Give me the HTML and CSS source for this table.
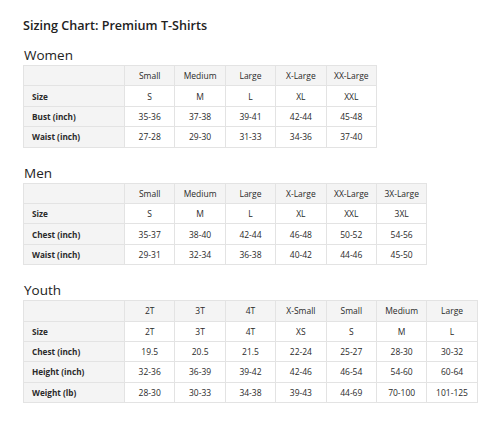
FILE: index.html
```html
<!DOCTYPE html>
<html>
<head>
<meta charset="utf-8">
<link rel="stylesheet" href="styles.css">
</head>
<body>
<main class="page">
  <h1 class="title">Sizing Chart: Premium T-Shirts</h1>

  <section class="group">
    <h2 class="group-title">Women</h2>
    <table class="chart">
      <tr class="head"><th></th><th>Small</th><th>Medium</th><th>Large</th><th>X-Large</th><th>XX-Large</th></tr>
      <tr><th>Size</th><td>S</td><td>M</td><td>L</td><td>XL</td><td>XXL</td></tr>
      <tr><th>Bust (inch)</th><td>35-36</td><td>37-38</td><td>39-41</td><td>42-44</td><td>45-48</td></tr>
      <tr><th>Waist (inch)</th><td>27-28</td><td>29-30</td><td>31-33</td><td>34-36</td><td>37-40</td></tr>
    </table>
  </section>

  <section class="group">
    <h2 class="group-title">Men</h2>
    <table class="chart">
      <tr class="head"><th></th><th>Small</th><th>Medium</th><th>Large</th><th>X-Large</th><th>XX-Large</th><th>3X-Large</th></tr>
      <tr><th>Size</th><td>S</td><td>M</td><td>L</td><td>XL</td><td>XXL</td><td>3XL</td></tr>
      <tr><th>Chest (inch)</th><td>35-37</td><td>38-40</td><td>42-44</td><td>46-48</td><td>50-52</td><td>54-56</td></tr>
      <tr><th>Waist (inch)</th><td>29-31</td><td>32-34</td><td>36-38</td><td>40-42</td><td>44-46</td><td>45-50</td></tr>
    </table>
  </section>

  <section class="group">
    <h2 class="group-title">Youth</h2>
    <table class="chart">
      <tr class="head"><th></th><th>2T</th><th>3T</th><th>4T</th><th>X-Small</th><th>Small</th><th>Medium</th><th>Large</th></tr>
      <tr><th>Size</th><td>2T</td><td>3T</td><td>4T</td><td>XS</td><td>S</td><td>M</td><td>L</td></tr>
      <tr><th>Chest (inch)</th><td>19.5</td><td>20.5</td><td>21.5</td><td>22-24</td><td>25-27</td><td>28-30</td><td>30-32</td></tr>
      <tr><th>Height (inch)</th><td>32-36</td><td>36-39</td><td>39-42</td><td>42-46</td><td>46-54</td><td>54-60</td><td>60-64</td></tr>
      <tr><th>Weight (lb)</th><td>28-30</td><td>30-33</td><td>34-38</td><td>39-43</td><td>44-69</td><td>70-100</td><td>101-125</td></tr>
    </table>
  </section>
</main>
</body>
</html>
```

FILE: styles.css
```css
html, body {
  margin: 0;
  padding: 0;
  background: #ffffff;
}

body {
  font-family: "Open Sans", "Noto Sans", sans-serif;
  color: #2b2b2b;
}

.page {
  padding: 17px 0 0 23px;
}

.title {
  margin: 0;
  font-size: 12.6px;
  font-weight: 600;
  line-height: 18px;
  color: #222;
}

.group {
  margin-top: 11px;
}

.group + .group {
  margin-top: 16px;
}

.group-title {
  margin: 0 0 1px 1px;
  font-size: 13.5px;
  font-weight: 400;
  line-height: 18px;
  color: #222;
}

.chart {
  border-collapse: collapse;
  table-layout: fixed;
  font-size: 8.5px;
}

.chart th,
.chart td {
  border: 1px solid #e3e3e3;
  height: 19.4px;
  padding: 0;
  width: 49.4px;
  text-align: center;
  font-weight: 400;
  color: #2a2a2a;
  white-space: nowrap;
}

.chart tr > th:first-child {
  width: 92px;
  padding-left: 8px;
  text-align: left;
  font-weight: 700;
  font-size: 8.2px;
  background: #f4f4f4;
}

.chart .head th {
  background: #f4f4f4;
}
```
